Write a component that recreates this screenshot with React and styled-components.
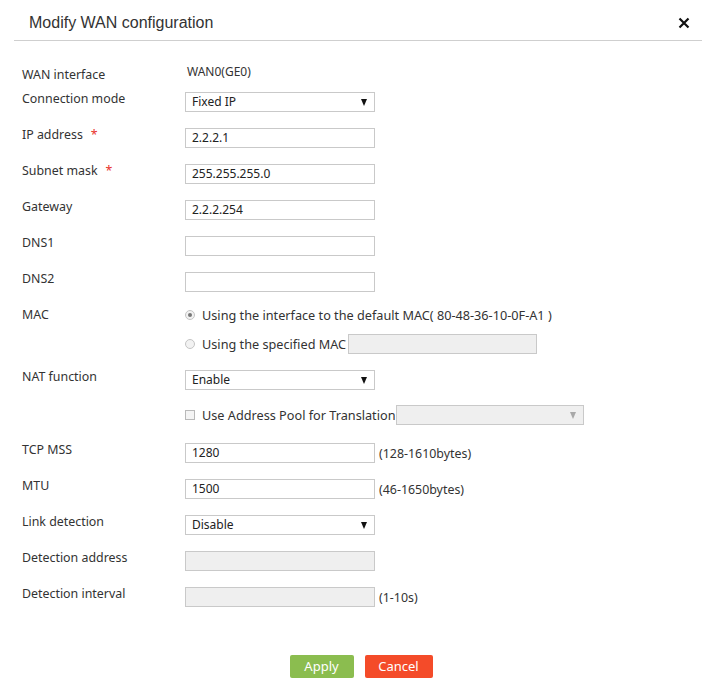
import React from "react";
import styled, { createGlobalStyle } from "styled-components";

const Global = createGlobalStyle`
  html, body { margin: 0; padding: 0; background: #fff; }
  body { font-family: "Noto Sans", "Open Sans", sans-serif; color: #333; }
  * { box-sizing: border-box; }
`;

const Dialog = styled.div`
  width: 714px;
  height: 699px;
  background: #fff;
  position: relative;
`;

const Header = styled.div`
  margin: 0 12px 0 14px;
  height: 41px;
  border-bottom: 1px solid #cfcfcf;
  display: flex;
  align-items: center;
  justify-content: space-between;
  padding: 5px 12px 0 15px;
`;

const Title = styled.h1`
  margin: 0;
  font-family: "Liberation Sans", Arial, sans-serif;
  font-size: 16px;
  font-weight: normal;
  color: #333;
`;

const Close = styled.button`
  border: 0;
  background: none;
  padding: 0;
  width: 12px;
  height: 12px;
  display: flex;
  cursor: pointer;
`;

const Form = styled.div`
  padding: 27px 0 0 22px;
  display: flex;
  flex-direction: column;
`;

const Row = styled.div`
  display: flex;
  align-items: flex-start;
  margin-top: ${(p) => p.$mt ?? 16}px;
`;

const Label = styled.div`
  width: 163px;
  flex: none;
  font-size: 12.4px;
  line-height: 14px;
  margin-top: ${(p) => p.$lt ?? 0}px;
  color: #333;
  white-space: nowrap;
`;

const Star = styled.span`
  color: #e8302a;
  margin-left: 8px;
`;

const Controls = styled.div`
  display: flex;
  flex-direction: column;
`;

const Line = styled.div`
  display: flex;
  align-items: center;
  gap: ${(p) => p.$gap ?? 4}px;
  height: ${(p) => p.$h ?? 20}px;
  font-size: ${(p) => p.$fs ?? 12}px;
  color: #333;
  white-space: nowrap;
  margin-top: ${(p) => p.$mt ?? 0}px;
`;

const Value = styled.div`
  font-size: 12px;
  line-height: 14px;
  margin-top: -3px;
  padding-left: 2px;
  color: #333;
`;

const Input = styled.div`
  width: ${(p) => p.$w ?? 190}px;
  height: 20px;
  border: 1px solid #c9c9c9;
  background: ${(p) => (p.$disabled ? "#efefef" : "#fff")};
  font-size: 12px;
  line-height: 18px;
  padding-left: 6px;
  color: #222;
  flex: none;
  display: flex;
  align-items: center;
  justify-content: space-between;
  padding-right: 7px;
  margin-left: ${(p) => p.$ml ?? 0}px;
`;

const Arrow = styled.span`
  width: 0;
  height: 0;
  border-left: 3.5px solid transparent;
  border-right: 3.5px solid transparent;
  border-top: 7px solid ${(p) => (p.$muted ? "#a8a8a8" : "#111")};
  margin-top: 1px;
`;

const Hint = styled.span`
  font-size: 12.4px;
  color: #333;
`;

const Radio = styled.span`
  width: 10px;
  height: 10px;
  border-radius: 50%;
  border: 1px solid #c4c4c4;
  background: #f2f2f2;
  flex: none;
  display: flex;
  align-items: center;
  justify-content: center;
  margin-right: 7px;
  &::after {
    content: "";
    width: 4px;
    height: 4px;
    border-radius: 50%;
    background: ${(p) => (p.$checked ? "#777" : "transparent")};
  }
`;

const Check = styled.span`
  width: 10px;
  height: 10px;
  border: 1px solid #b9b9b9;
  background: #f4f4f4;
  flex: none;
  margin-right: 7px;
`;

const Buttons = styled.div`
  display: flex;
  justify-content: center;
  gap: 11px;
  margin-top: 48px;
  padding-left: 8px;
`;

const Button = styled.button`
  border: 0;
  border-radius: 2px;
  height: 23px;
  width: ${(p) => p.$w}px;
  background: ${(p) => p.$bg};
  color: #fff;
  font-family: "Noto Sans", sans-serif;
  font-size: 13px;
  padding: 0;
  line-height: 23px;
  cursor: pointer;
`;

function Select({ value, w }) {
  return (
    <Input $w={w}>
      <span>{value}</span>
      <Arrow />
    </Input>
  );
}

export default function App() {
  return (
    <Dialog>
      <Global />
      <Header>
        <Title>Modify WAN configuration</Title>
        <Close aria-label="close">
          <svg width="12" height="12" viewBox="0 0 12 12">
            <path d="M1.5 1.5 L10.5 10.5 M10.5 1.5 L1.5 10.5" stroke="#111" strokeWidth="2.2" />
          </svg>
        </Close>
      </Header>
      <Form>
        <Row $mt={0}>
          <Label $lt={0}>WAN interface</Label>
          <Value>WAN0(GE0)</Value>
        </Row>
        <Row $mt={10}>
          <Label>Connection mode</Label>
          <Select value="Fixed IP" />
        </Row>
        <Row>
          <Label>IP address<Star>*</Star></Label>
          <Input>2.2.2.1</Input>
        </Row>
        <Row>
          <Label>Subnet mask<Star>*</Star></Label>
          <Input>255.255.255.0</Input>
        </Row>
        <Row>
          <Label>Gateway</Label>
          <Input>2.2.2.254</Input>
        </Row>
        <Row>
          <Label>DNS1</Label>
          <Input />
        </Row>
        <Row>
          <Label>DNS2</Label>
          <Input />
        </Row>
        <Row>
          <Label>MAC</Label>
          <Controls>
            <Line $gap={0} $h={14} $fs={12.7}>
              <Radio $checked />
              Using the interface to the default MAC( 80-48-36-10-0F-A1 )
            </Line>
            <Line $gap={0} $mt={12} $fs={12.7}>
              <Radio />
              Using the specified MAC
              <Input $w={189} $disabled $ml={2} />
            </Line>
          </Controls>
        </Row>
        <Row>
          <Label>NAT function</Label>
          <Select value="Enable" />
        </Row>
        <Row $mt={15}>
          <Label />
          <Line $gap={0} $fs={12.7}>
            <Check />
            Use Address Pool for Translation
            <Input $w={188} $disabled $ml={0}>
              <span />
              <Arrow $muted />
            </Input>
          </Line>
        </Row>
        <Row $mt={18}>
          <Label>TCP MSS</Label>
          <Line>
            <Input>1280</Input>
            <Hint>(128-1610bytes)</Hint>
          </Line>
        </Row>
        <Row>
          <Label>MTU</Label>
          <Line>
            <Input>1500</Input>
            <Hint>(46-1650bytes)</Hint>
          </Line>
        </Row>
        <Row>
          <Label>Link detection</Label>
          <Select value="Disable" />
        </Row>
        <Row>
          <Label>Detection address</Label>
          <Input $disabled />
        </Row>
        <Row>
          <Label>Detection interval</Label>
          <Line>
            <Input $disabled />
            <Hint>(1-10s)</Hint>
          </Line>
        </Row>
      </Form>
      <Buttons>
        <Button $w={64} $bg="#8bbd4f">Apply</Button>
        <Button $w={68} $bg="#f44b29">Cancel</Button>
      </Buttons>
    </Dialog>
  );
}
